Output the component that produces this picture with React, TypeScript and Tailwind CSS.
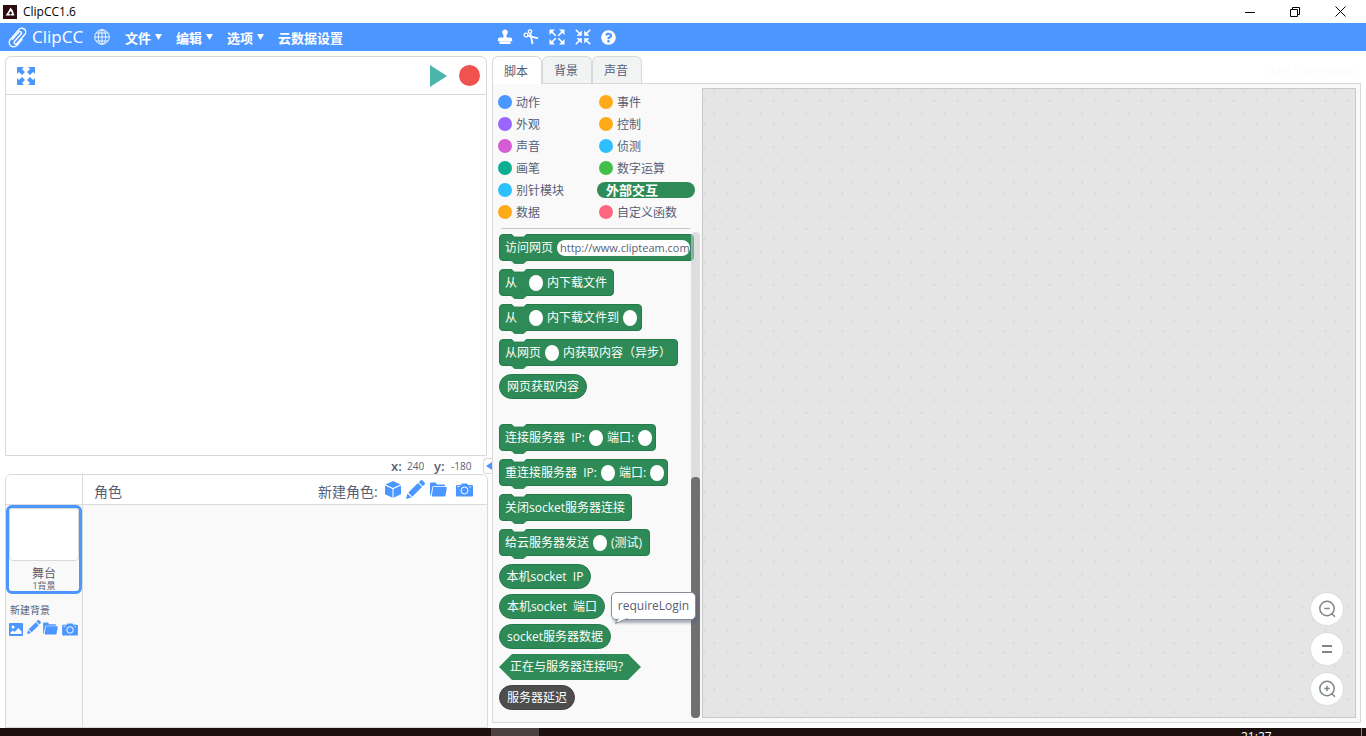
import React, {useState} from "react";
import {FaQuestionCircle} from "react-icons/fa";
import clsx from "clsx";

type Category = {
    name: string;
    color: string;
};

// a null part is an empty input slot
type BlockPart = string | null;

type Block = {
    kind: "stack" | "reporter" | "boolean";
    parts: BlockPart[];
    width: string;
    className?: string;
};

const categories: Category[] = [
    {name: "动作", color: "bg-[#4c97ff]"},
    {name: "事件", color: "bg-[#ffab19]"},
    {name: "外观", color: "bg-[#9966ff]"},
    {name: "控制", color: "bg-[#ffab19]"},
    {name: "声音", color: "bg-[#d65cd6]"},
    {name: "侦测", color: "bg-[#2ebfff]"},
    {name: "画笔", color: "bg-[#0aae93]"},
    {name: "数字运算", color: "bg-[#40bf4a]"},
    {name: "别针模块", color: "bg-[#2ebfff]"},
    {name: "外部交互", color: "bg-[#2e8b57]"},
    {name: "数据", color: "bg-[#ffab19]"},
    {name: "自定义函数", color: "bg-[#ff6680]"},
];

const blocks: Block[] = [
    {kind: "stack", parts: ["从", "", null, "内下载文件"], width: "w-[115px]"},
    {kind: "stack", parts: ["从", "", null, "内下载文件到", null], width: "w-[143px]"},
    {kind: "stack", parts: ["从网页", null, "内获取内容（异步）"], width: "w-[179px]"},
    {kind: "reporter", parts: ["网页获取内容"], width: "w-[88px]", className: "mb-[25px]"},
    {kind: "stack", parts: ["连接服务器  IP:", null, "端口:", null], width: "w-[157px]"},
    {kind: "stack", parts: ["重连接服务器  IP:", null, "端口:", null], width: "w-[169px]"},
    {kind: "stack", parts: ["关闭socket服务器连接"], width: "w-[133px]"},
    {kind: "stack", parts: ["给云服务器发送", null, "(测试)"], width: "w-[151px]"},
    {kind: "reporter", parts: ["本机socket  IP"], width: "w-[92px]"},
    {kind: "reporter", parts: ["本机socket  端口"], width: "w-[106px]"},
    {kind: "reporter", parts: ["socket服务器数据"], width: "w-[112px]"},
    {kind: "boolean", parts: ["正在与服务器连接吗?"], width: "w-[142px]"},
    {kind: "reporter", parts: ["服务器延迟"], width: "w-[76px]", className: "bg-[#4d4d4d] border-[#473f42]"},
];

function AppLogo() {
    return (
        <svg className="size-[14px]" viewBox="0 0 14 14">
            <rect width="14" height="14" fill="#2d0b10"/>
            <path d="M7.500 2.500 9.800 5.500 11.500 10.500H7.500V9H9L8 6 5.500 8.500 7 9v1.500H2.500L5 7z" fill="#fff"/>
        </svg>
    );
}

function ClipIcon() {
    return (
        <svg className="w-5 h-[21px]" viewBox="0 0 20 21" fill="none" stroke="#fff" strokeWidth="1.400" strokeLinecap="round">
            <path d="M13.500 6.500 6.500 14.500a1.600 1.600 0 0 0 2.500 2L16.800 7.500a3.700 3.700 0 0 0-5.800-5L2.200 12.700a4.400 4.400 0 0 0 6.600 5.800L14 12.500"/>
            <path d="M13.500 6.500a1.600 1.600 0 0 0-2.600-1.600L4.500 12.300"/>
        </svg>
    );
}

function GlobeIcon() {
    return (
        <svg className="size-4" viewBox="0 0 16 16" fill="none" stroke="#fff" strokeWidth="0.9">
            <circle cx="8" cy="8" r="7.3"/>
            <ellipse cx="8" cy="8" rx="3.7" ry="7.3"/>
            <path d="M8 .7v14.6M.7 8h14.6M2 4h12M2 12h12"/>
        </svg>
    );
}

function StampIcon() {
    return (
        <svg className="size-4" viewBox="0 0 16 16" fill="currentColor">
            <path d="M8 .5a2.800 2.800 0 0 0-2.200 4.500C6.600 6.100 6.600 7.500 6.300 8.500H3a2.200 2.200 0 0 0-2.200 2.200v1.600h14.400v-1.600A2.200 2.200 0 0 0 13 8.500H9.700C9.400 7.500 9.400 6.100 10.200 5A2.800 2.800 0 0 0 8 .5z"/>
            <path d="M2.500 12.300h11v2.700h-11z"/>
        </svg>
    );
}

function CutIcon() {
    return (
        <svg className="size-4" viewBox="0 0 16 16" fill="none" stroke="currentColor" strokeWidth="1.3">
            <circle cx="3" cy="6" r="1.900"/>
            <circle cx="7" cy="2.600" r="1.700"/>
            <path d="M4.800 6.600 15 9.300M7.300 4.400 9.600 15" strokeWidth="1.800"/>
        </svg>
    );
}

function GrowIcon() {
    return (
        <svg className="size-4" viewBox="0 0 16 16" fill="currentColor">
            <path d="M.5.5h5.500L.5 6zM15.500.5H10L15.500 6zM.5 15.500H6L.5 10zM15.500 15.500H10L15.500 10z"/>
            <path d="m2 2 4.700 4.700M14 2 9.300 6.700M2 14l4.700-4.700M14 14 9.300 9.300" stroke="currentColor" strokeWidth="1.600"/>
        </svg>
    );
}

function ShrinkIcon() {
    return (
        <svg className="size-4" viewBox="0 0 16 16" fill="currentColor">
            <path d="M6.800 6.800V1.500L1.500 6.800zM9.200 6.800V1.500l5.300 5.300zM6.800 9.200v5.300L1.500 9.200zM9.200 9.200v5.300l5.300-5.300z"/>
            <path d="m.800.800 4.500 4.500M15.200.800l-4.500 4.500M.800 15.200l4.500-4.500M15.200 15.200l-4.500-4.500" stroke="currentColor" strokeWidth="1.600"/>
        </svg>
    );
}

function FullscreenIcon() {
    return (
        <svg className="size-[18px]" viewBox="0 0 18 18" fill="#4c97ff">
            <path d="M0 0h7L5 2l3 3-3 3-3-3-2 2zM18 0h-7l2 2-3 3 3 3 3-3 2 2zM0 18h7l-2-2 3-3-3-3-3 3-2-2zM18 18h-7l2-2-3-3 3-3 3 3 2-2z"/>
        </svg>
    );
}

function CubeIcon() {
    return (
        <svg className="w-4 h-[17px]" viewBox="0 0 16 17" fill="#4c97ff">
            <path d="M8 0 15.500 3.500 8 7 .5 3.500zM0 4.600l7.500 3.500v8.700L0 13.200zM16 4.600 8.500 8.100v8.700l7.500-3.600z"/>
        </svg>
    );
}

function PencilIcon({className}: { className: string }) {
    return (
        <svg className={className} viewBox="0 0 19 19" fill="#4c97ff">
            <path d="M0 19 1.500 13.500 5.500 17.500zM2.300 12.600 12 3l4 4-9.700 9.700zM12.800 2.200 14.500.500a1.500 1.500 0 0 1 2 0l2 2a1.500 1.500 0 0 1 0 2L16.800 6.200z"/>
        </svg>
    );
}

function FolderIcon({className}: { className: string }) {
    return (
        <svg className={className} viewBox="0 0 17 15" fill="#4c97ff">
            <path d="M0 1.500Q0 .500 1 .500h4.500l1.500 2h7q1 0 1 1v.7H3.500q-1 0-1.200 1L.8 13.500Q0 13.300 0 12.500z"/>
            <path d="M3.600 5H16q1 0 .8 1l-1.300 7.500q-.2 1-1.200 1H1.700L3 5.800q.1-.8.6-.8z"/>
        </svg>
    );
}

function CameraIcon({className}: { className: string }) {
    return (
        <svg className={className} viewBox="0 0 17 14">
            <path d="M1 2h4l.8-1.500h5.400L12 2h4q1 0 1 1v9.500q0 1-1 1H1q-1 0-1-1V3q0-1 1-1z" fill="#4c97ff"/>
            <circle cx="8.500" cy="7.500" r="3.500" fill="none" stroke="#fff"/>
            <path d="M13.500 4h1.500M1.500 3.500h2" stroke="#fff"/>
        </svg>
    );
}

function ImageIcon() {
    return (
        <svg className="w-[14px] h-[13px]" viewBox="0 0 14 13">
            <rect width="14" height="13" rx="1" fill="#4c97ff"/>
            <circle cx="4" cy="4" r="1.500" fill="#fff"/>
            <path d="M1.500 11V9.500l2.500-2 1.500 1.500 4-4 3 3.500V11z" fill="#fff"/>
        </svg>
    );
}

function ZoomIcon({plus}: { plus?: boolean }) {
    return (
        <svg className="size-[18px]" viewBox="0 0 18 18" fill="none" stroke="#7f878c" strokeWidth="1.500">
            <circle cx="9" cy="8.500" r="7.200"/>
            <path d="m13.500 13.500 3.500 3.300M6.300 8.500h5.400"/>
            {plus && <path d="M9 5.800v5.400"/>}
        </svg>
    );
}

function MenuItem({label, arrow = true}: { label: string, arrow?: boolean }) {
    return (
        <button className="flex items-center gap-1 text-[13px] leading-4 font-bold">
            <span className="pt-[2px]">{label}</span>
            {arrow && (
                <svg className="w-[7px] h-[6px]" viewBox="0 0 7 6" fill="#fff">
                    <path d="M0 0h7L3.500 6z"/>
                </svg>
            )}
        </button>
    );
}

function StackBlock({width, children}: { width: string, children: React.ReactNode }) {
    return (
        <div className={clsx("relative h-[27px] mb-2 shrink-0 flex items-center gap-1 rounded-[4px] border border-[#247a49] bg-[#2e8b57] pl-[5px]", width)}>
            <svg className="absolute left-[11px] -top-px w-4 h-[4px]" viewBox="0 0 16 4">
                <path d="M0 0h16l-3.500 3h-9z" fill="#f9f9f9"/>
                <path d="m0 0 3.500 3h9L16 0" fill="none" stroke="#247a49" strokeWidth="0.800"/>
            </svg>
            <svg className="absolute left-[11px] -bottom-1 w-4 h-[4px]" viewBox="0 0 16 4">
                <path d="M0 0h16l-3.500 3.500h-9z" fill="#2e8b57"/>
                <path d="m0 .5 3.500 3h9l3.500-3" fill="none" stroke="#247a49" strokeWidth="0.800"/>
            </svg>
            {children}
        </div>
    );
}

function BlockParts({parts}: { parts: BlockPart[] }) {
    return parts.map((part, i) => part === null
        ? <input key={i} aria-label="参数" className="w-[14px] h-4 shrink-0 rounded-[50%] bg-white"/>
        : <span key={i} className={clsx("whitespace-pre", part === "" && "w-1")}>{part}</span>
    );
}

function BlockView({block}: { block: Block }) {
    if (block.kind === "stack") {
        return <StackBlock width={block.width}><BlockParts parts={block.parts}/></StackBlock>;
    }
    if (block.kind === "boolean") {
        return (
            <div className={clsx("h-[26px] mb-[5px] shrink-0 flex items-center bg-[#2e8b57] pl-[11px] [clip-path:polygon(13px_0,calc(100%-13px)_0,100%_50%,calc(100%-13px)_100%,13px_100%,0_50%)]", block.width)}>
                <BlockParts parts={block.parts}/>
            </div>
        );
    }
    return (
        <div className={clsx("h-[25px] shrink-0 flex items-center justify-center rounded-full border", block.width, block.className?.includes("bg-") ? block.className : ["border-[#247a49] bg-[#2e8b57]", block.className ?? "mb-[5px]"])}>
            <BlockParts parts={block.parts}/>
        </div>
    );
}

export default function App() {
    const [tab, setTab] = useState("脚本");
    const [category, setCategory] = useState("外部交互");
    const [url, setUrl] = useState("http://www.clipteam.com");

    return (
        <div className="h-screen flex flex-col overflow-hidden bg-white text-[#575e75] text-xs font-['Open_Sans','Noto_Sans_CJK_SC',sans-serif]">
            {/* Window title */}
            <header className="h-[23px] shrink-0 flex items-center justify-between pl-[3px] pr-5 text-black">
                <div className="flex items-center gap-[6px]">
                    <AppLogo/>
                    <span>ClipCC1.6</span>
                </div>
                <div className="flex items-center gap-[35px]">
                    <button aria-label="最小化">
                        <svg className="size-[10px]" viewBox="0 0 10 10"><path d="M0 5.500h10" stroke="#000"/></svg>
                    </button>
                    <button aria-label="还原">
                        <svg className="size-[10px]" viewBox="0 0 10 10" fill="none" stroke="#000">
                            <path d="M.5 2.500h7v7h-7zM2.500 2V.5h7v7H8"/>
                        </svg>
                    </button>
                    <button aria-label="关闭">
                        <svg className="size-[11px]" viewBox="0 0 11 11"><path d="m.5.5 10 10M10.500.5l-10 10" stroke="#000"/></svg>
                    </button>
                </div>
            </header>

            {/* Menu bar */}
            <nav className="h-7 shrink-0 flex items-center bg-[#4c97ff] text-white">
                <div className="w-[497px] shrink-0 flex items-center pl-2">
                    <ClipIcon/>
                    <span className="w-[66px] pl-1 text-[17px] leading-6">ClipCC</span>
                    <button aria-label="语言"><GlobeIcon/></button>
                    <div className="flex items-center gap-[14px] pl-[15px]">
                        <MenuItem label="文件"/>
                        <MenuItem label="编辑"/>
                        <MenuItem label="选项"/>
                        <MenuItem label="云数据设置" arrow={false}/>
                    </div>
                </div>
                <div className="flex items-center gap-[10px]">
                    <button aria-label="复制"><StampIcon/></button>
                    <button aria-label="删除"><CutIcon/></button>
                    <button aria-label="放大"><GrowIcon/></button>
                    <button aria-label="缩小"><ShrinkIcon/></button>
                    <button aria-label="帮助"><FaQuestionCircle className="size-[15px]"/></button>
                </div>
            </nav>

            <main className="flex-1 min-h-0 flex pl-[5px] pr-[5px] pt-[5px]">
                {/* Stage and sprites */}
                <div className="w-[483px] shrink-0 flex flex-col">
                    <section className="h-[400px] w-[482px] shrink-0 flex flex-col rounded-t-md border border-[#d9d9d9]">
                        <div className="h-[38px] shrink-0 flex items-center justify-between border-b border-[#d9d9d9] pl-[11px] pr-[6px]">
                            <button aria-label="全屏"><FullscreenIcon/></button>
                            <div className="flex items-center gap-3">
                                <button aria-label="运行">
                                    <svg className="w-[17px] h-[22px]" viewBox="0 0 17 22"><path d="M0 0l17 11L0 22z" fill="#4cb5ab"/></svg>
                                </button>
                                <button aria-label="停止" className="size-[21px] rounded-full bg-[#f0524f]"/>
                            </div>
                        </div>
                    </section>
                    <div className="h-[18px] -mr-1 shrink-0 flex items-center justify-end pt-[2px]">
                        <span className="w-4 text-[13px] leading-4 font-semibold">x:</span>
                        <span className="w-[27px] text-[10px] leading-4">240</span>
                        <span className="w-[17px] text-[13px] leading-4 font-semibold">y:</span>
                        <span className="w-8 text-[10px] leading-4">-180</span>
                        <button aria-label="收起舞台" className="h-4 w-[9px] flex items-center justify-end rounded-l border border-r-0 border-[#d9d9d9]">
                            <svg className="w-[6px] h-[8px]" viewBox="0 0 6 8"><path d="M6 0v8L0 4z" fill="#4c97ff"/></svg>
                        </button>
                    </div>
                    <section className="flex-1 min-h-0 flex rounded-t-md border border-[#d9d9d9] bg-[#f9f9f9] overflow-hidden">
                        <div className="w-[77px] shrink-0 flex flex-col border-r border-[#d9d9d9]">
                            <div className="h-[30px] shrink-0 bg-white border-b border-[#d9d9d9]"/>
                            <button className="h-[89px] shrink-0 flex flex-col items-center rounded-md border-[3px] border-[#4c97ff]">
                                <span className="w-full h-[53px] bg-white border border-[#d9d9d9] rounded-sm"/>
                                <span className="pt-1 leading-[17px]">舞台</span>
                                <span className="text-[9px] leading-[7px]">1背景</span>
                            </button>
                            <span className="pt-2 pl-1 text-[10px] leading-4">新建背景</span>
                            <div className="flex items-center gap-1 pl-[3px] pt-[2px]">
                                <button aria-label="背景库"><ImageIcon/></button>
                                <button aria-label="绘制背景"><PencilIcon className="size-[14px] mb-1"/></button>
                                <button aria-label="上传背景" className="-ml-1 pl-[2px]"><FolderIcon className="w-[15px] h-[13px] mb-[2px]"/></button>
                                <button aria-label="拍摄背景"><CameraIcon className="w-4 h-[13px]"/></button>
                            </div>
                        </div>
                        <div className="flex-1">
                            <div className="h-[30px] flex items-center justify-between bg-white border-b border-[#d9d9d9] pl-[11px] pr-[14px]">
                                <h2 className="pt-1 text-sm">角色</h2>
                                <div className="flex items-center">
                                    <span className="w-[67px] pt-1 text-sm">新建角色:</span>
                                    <div className="flex items-center gap-[5px]">
                                        <button aria-label="角色库"><CubeIcon/></button>
                                        <button aria-label="绘制角色"><PencilIcon className="size-[19px]"/></button>
                                        <button aria-label="上传角色"><FolderIcon className="w-[17px] h-[15px]"/></button>
                                        <button aria-label="拍摄角色" className="pl-1"><CameraIcon className="w-[17px] h-[14px]"/></button>
                                    </div>
                                </div>
                            </div>
                        </div>
                    </section>
                </div>

                {/* Editor */}
                <div className="flex-1 min-w-0 flex flex-col pl-1 pb-[5px]">
                    <div className="h-[27px] shrink-0 flex items-end justify-between pr-1">
                        <div className="flex items-end">
                            {["脚本", "背景", "声音"].map(name => (
                                <button
                                    key={name}
                                    onClick={() => setTab(name)}
                                    className={clsx(
                                        "relative w-[50px] rounded-t-md border border-b-0 border-[#d9d9d9] pt-[2px] pr-[2px]",
                                        tab === name ? "h-7 -mb-px bg-white" : "h-[27px] bg-[#f2f3f3]"
                                    )}
                                >
                                    {name}
                                </button>
                            ))}
                        </div>
                        <span className="text-sm leading-6 text-[#fcfcfc]">My Extension</span>
                    </div>
                    <div className="flex-1 min-h-0 flex border border-[#d9d9d9] bg-[#f9f9f9] pt-1 pr-1 pb-1">
                        <div className="relative w-[209px] shrink-0 flex flex-col pl-1 pt-[3px]">
                            <div className="grid grid-cols-[101px_98px]">
                                {categories.map(c => (
                                    <button
                                        key={c.name}
                                        onClick={() => setCategory(c.name)}
                                        className="h-[22px] flex items-center"
                                    >
                                        {c.name === category ? (
                                            <span className={clsx("w-[98px] -ml-px h-4 rounded-full pl-[9px] text-left text-[13px] leading-[17px] font-bold text-white", c.color)}>{c.name}</span>
                                        ) : (
                                            <span className="flex items-center gap-1 pl-px">
                                                <span className={clsx("size-[14px] rounded-full", c.color)}/>
                                                <span className="pt-[2px]">{c.name}</span>
                                            </span>
                                        )}
                                    </button>
                                ))}
                            </div>
                            <div className="mt-[5px] ml-1 mr-3 h-px shrink-0 bg-[#c4c6c7]"/>
                            <div className="flex-1 min-h-0 flex flex-col items-start overflow-hidden pl-[2px] pt-[5px] text-white">
                                <StackBlock width="w-[195px]">
                                    <label htmlFor="url">访问网页</label>
                                    <input
                                        id="url"
                                        value={url}
                                        onChange={e => setUrl(e.target.value)}
                                        className="w-[133px] h-4 rounded-full bg-white pl-[3px] text-[11px] text-[#575e75]"
                                    />
                                </StackBlock>
                                {blocks.map((b, i) => <BlockView key={i} block={b}/>)}
                            </div>
                            {/* scroll track and thumb */}
                            <div className="absolute right-[2px] top-36 bottom-0 w-[9px] flex flex-col justify-end rounded-full bg-[#c9cbcb]/60">
                                <div className="h-[241px] rounded-[4px] bg-[#6f7072]"/>
                            </div>
                            <div role="tooltip" className="absolute left-[118px] top-[504px] w-[85px] h-7 flex items-center justify-center rounded-[5px] border border-[#888d9a] bg-white shadow-[2px_3px_3px_rgba(87,94,117,0.5)]">
                                requireLogin
                                <svg className="absolute left-[3px] -bottom-[6px] w-[13px] h-[7px]" viewBox="0 0 13 7">
                                    <path d="M3.500 0 .5 5.500 12.500 0z" fill="#fff"/>
                                    <path d="M3.500.500.500 5.500 12.500.500" fill="none" stroke="#888d9a"/>
                                </svg>
                            </div>
                        </div>
                        <div className="relative flex-1 border border-[#c8c8c8] bg-[#e5e5e5]">
                            <svg className="absolute inset-0 size-full">
                                <pattern id="grid" width="23" height="23" patternUnits="userSpaceOnUse">
                                    <path d="M11.500.500v3M10 2h3M1.500 10.500v3M0 12h3" stroke="#dadada"/>
                                </pattern>
                                <rect width="100%" height="100%" fill="url(#grid)"/>
                            </svg>
                            <div className="absolute right-3 bottom-3 flex flex-col gap-2 *:flex *:size-8 *:items-center *:justify-center *:rounded-full *:bg-white *:shadow-[0_0_0_1px_#dedede]">
                                <button aria-label="缩小画布"><ZoomIcon/></button>
                                <button aria-label="重置画布">
                                    <svg className="w-[10px] h-2" viewBox="0 0 10 8" fill="#7f878c">
                                        <path d="M0 0h10v2H0zM0 6h10v2H0z"/>
                                    </svg>
                                </button>
                                <button aria-label="放大画布"><ZoomIcon plus/></button>
                            </div>
                        </div>
                    </div>
                </div>
            </main>

            {/* System taskbar */}
            <footer className="h-2 shrink-0 flex justify-between overflow-hidden bg-[#1b100e] text-white">
                <div className="ml-[491px] w-12 bg-[#4b4142]"/>
                <div className="w-[121px] border-r border-[#8a8482] mr-1">
                    <span className="block pt-px text-xs leading-4">21:27</span>
                </div>
            </footer>
        </div>
    );
}
